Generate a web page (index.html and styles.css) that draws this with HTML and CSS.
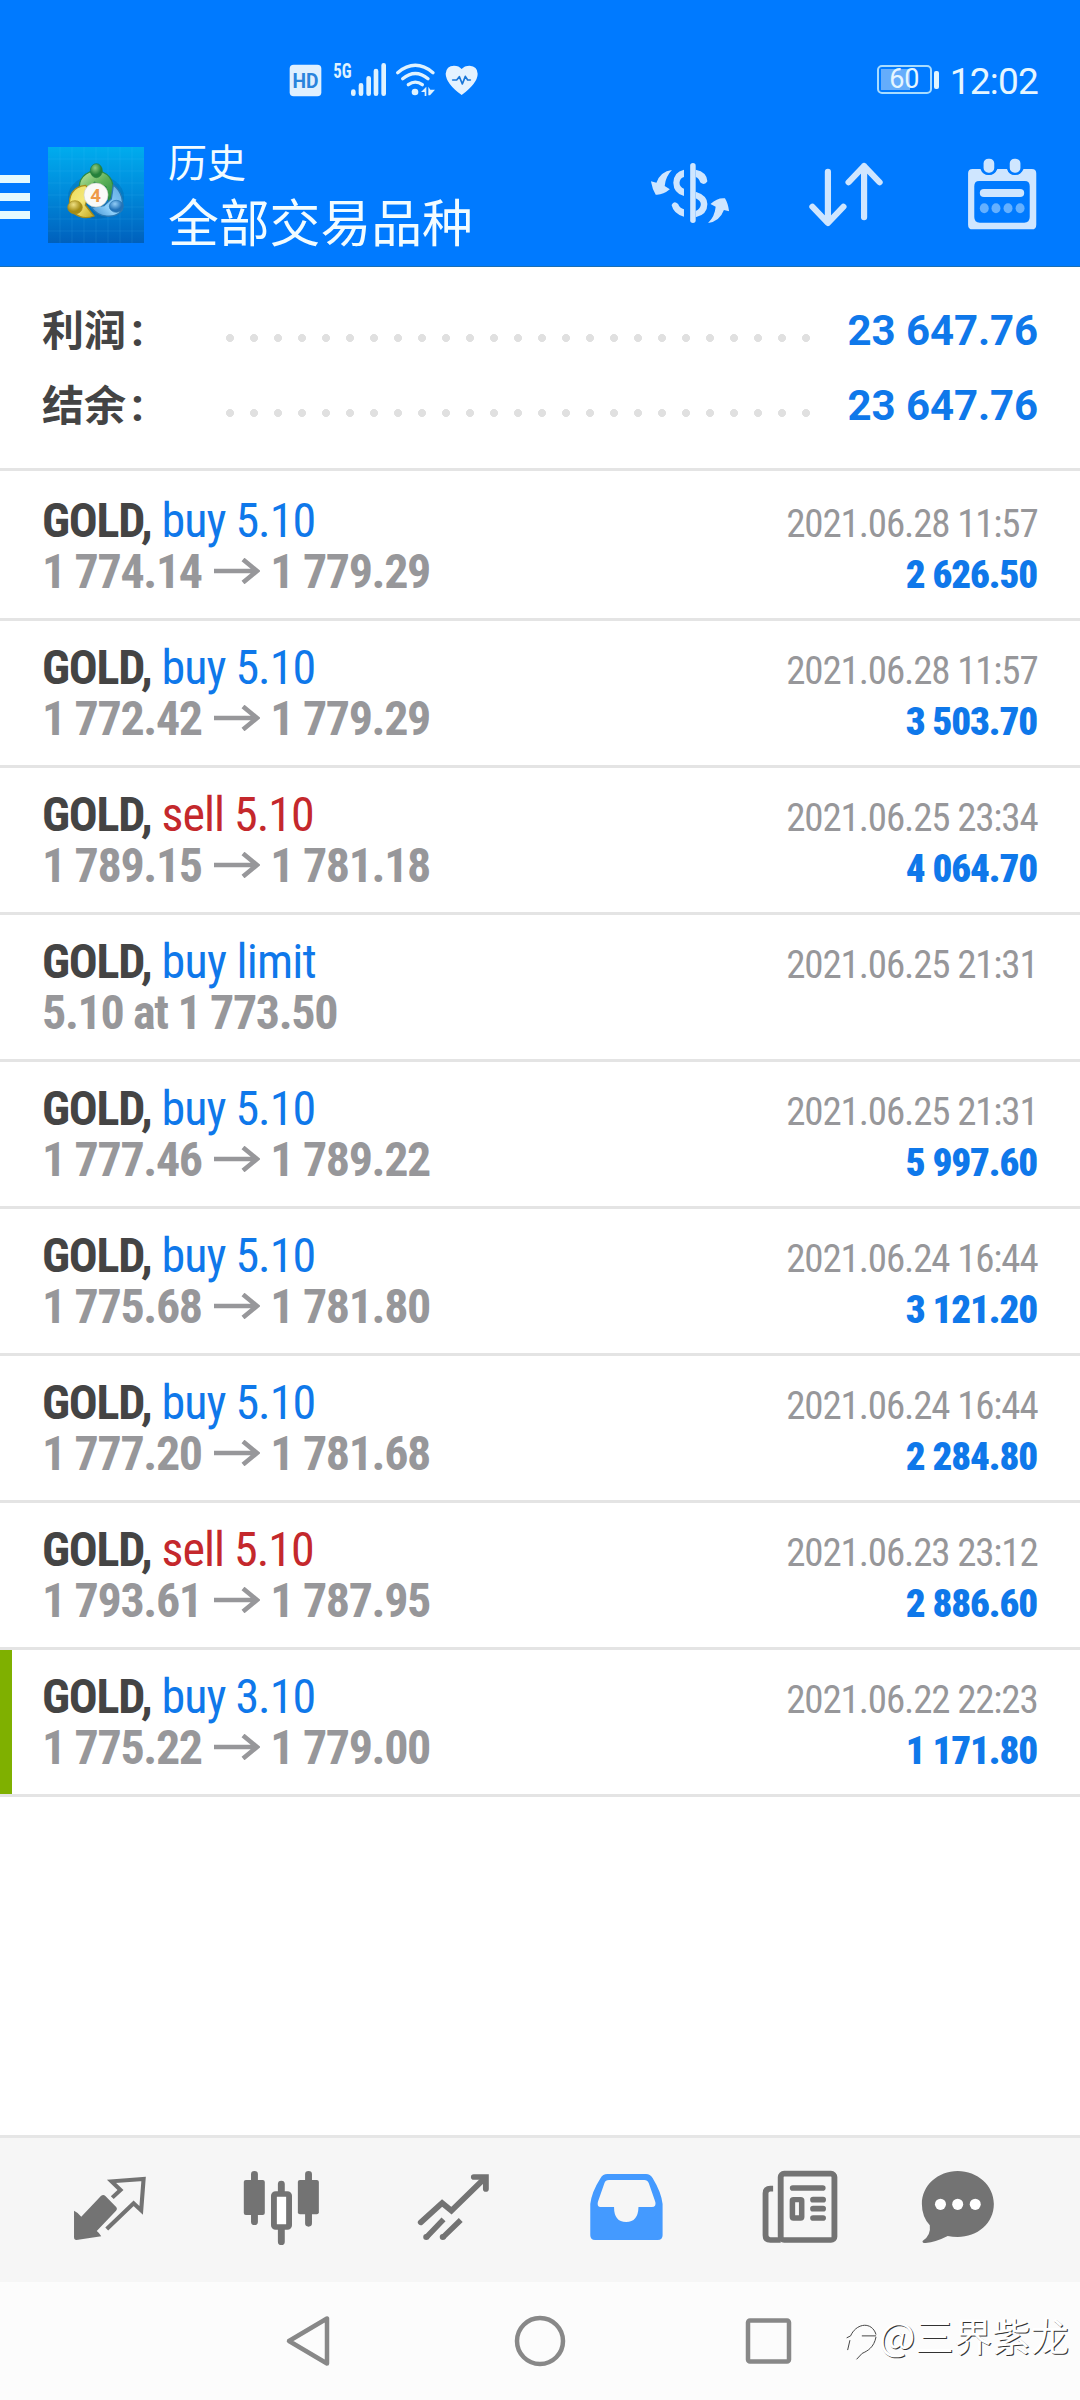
FILE: index.html
```html
<!DOCTYPE html>
<html lang="zh-CN">
<head>
<meta charset="utf-8">
<title>历史</title>
<link rel="stylesheet" href="styles.css">
</head>
<body>
<div class="screen">
  <header class="header">
    <div class="status">
      <svg class="status-icons" viewBox="0 0 630 150">
        <rect x="29" y="29" width="95" height="95" rx="12" fill="#dff0ff"/>
        <text x="76.500" y="98" class="hd" text-anchor="middle" textLength="78" lengthAdjust="spacingAndGlyphs">HD</text>
        <text x="160" y="68" class="net" textLength="55" lengthAdjust="spacingAndGlyphs">5G</text>
        <g stroke="#dff2ff" stroke-width="14" stroke-linecap="round">
          <path d="M220 110v6M243 91v25M266 70v46M288 48v68M311 31v85"/>
        </g>
        <g fill="none" stroke="#dff2ff" stroke-width="10" stroke-linecap="round">
          <path d="M353 53Q406 9 459 53M368 71Q406 40 444 71M385 89Q406 74 427 89"/>
        </g>
        <circle cx="405" cy="111" r="10" fill="#dff2ff"/>
        <path d="M423 111l16-16v28h-5v-12zM445 95l6 9h14l-15 17h-5z" fill="#dff2ff"/>
        <path d="M545 120Q498 86 497 56Q499 32 522 32Q537 32 545 42Q553 32 569 32Q592 33 593 56Q593 84 545 120Z" fill="#e4f2ff"/>
        <path d="M518 75h12l8-10 9 22 9-23 7 11h8" fill="none" stroke="#1976d8" stroke-width="5" stroke-linecap="round" stroke-linejoin="round"/>
      </svg>
      <div class="battery"><span class="cell"><b>60</b></span><i></i></div>
      <div class="clock">12:02</div>
    </div>
    <div class="appbar">
      <div class="menu"><i></i><i></i><i></i></div>
      <svg class="logo" viewBox="0 0 288 288">
        <defs>
          <linearGradient id="sky" x1="0" y1="0" x2="0" y2="1"><stop offset="0" stop-color="#00acee"/><stop offset=".45" stop-color="#008cdc"/><stop offset="1" stop-color="#0060bc"/></linearGradient>
          <linearGradient id="g" x1="0" y1="0" x2="1" y2="1"><stop offset="0" stop-color="#c2e8a4"/><stop offset=".5" stop-color="#5fb25a"/><stop offset="1" stop-color="#258b3c"/></linearGradient>
          <linearGradient id="y" x1="0" y1="0" x2="1" y2="1"><stop offset="0" stop-color="#e9da5c"/><stop offset=".5" stop-color="#f5e878"/><stop offset="1" stop-color="#c2a41c"/></linearGradient>
          <linearGradient id="b" x1="1" y1="0" x2="0" y2="1"><stop offset="0" stop-color="#5ba8e0"/><stop offset=".6" stop-color="#8fd0fa"/><stop offset="1" stop-color="#3a8cce"/></linearGradient>
          <radialGradient id="gb" cx=".4" cy=".3"><stop offset="0" stop-color="#8fcb82"/><stop offset="1" stop-color="#23803a"/></radialGradient>
          <radialGradient id="yb" cx=".4" cy=".3"><stop offset="0" stop-color="#efe083"/><stop offset="1" stop-color="#a58c14"/></radialGradient>
          <radialGradient id="bb" cx=".4" cy=".3"><stop offset="0" stop-color="#92cdf7"/><stop offset="1" stop-color="#2272b8"/></radialGradient>
        </defs>
        <path d="M0 0h288v288H0z" fill="url(#sky)"/>
        <path d="M36 0v288M72 0v288M108 0v288M144 0v288M180 0v288M216 0v288M252 0v288M0 36h288M0 72h288M0 108h288M0 144h288M0 180h288M0 216h288M0 252h288" stroke="#5ac8ff" stroke-opacity=".18" stroke-width="2"/>
        <ellipse cx="144" cy="150" rx="84" ry="66" fill="#024f86" opacity=".25"/>
        <path d="M125 75C92 90 86 122 104 145L140 106l34 14 8 40C204 134 200 90 163 75Z" fill="url(#g)" stroke="#2c8a44" stroke-width="4"/>
        <path d="M113 115C72 118 60 150 66 182c14 28 44 36 72 25l-26-33 14-42Z" fill="url(#y)" stroke="#a58b19" stroke-width="4"/>
        <path d="M196 114c26 20 32 52 26 76-22 26-69 24-92-9l38-5 22-20Z" fill="url(#b)" stroke="#2b79b4" stroke-width="4"/>
        <ellipse cx="145" cy="71" rx="18" ry="21" fill="url(#gb)" stroke="#267d3b" stroke-width="2"/>
        <ellipse cx="81" cy="181" rx="22" ry="20" fill="url(#yb)" stroke="#a48a1b" stroke-width="2"/>
        <ellipse cx="205" cy="178" rx="21" ry="18" fill="url(#bb)" stroke="#2875b0" stroke-width="2"/>
        <circle cx="144" cy="144" r="36" fill="#fafaf8" stroke="#cfd3c8" stroke-width="2"/>
        <text x="143" y="164" class="four" text-anchor="middle">4</text>
      </svg>
      <div class="titles">
        <div class="t1">历史</div>
        <div class="t2">全部交易品种</div>
      </div>
      <div class="actions">
        <svg viewBox="209 330 453 270" preserveAspectRatio="none" fill="#cfe6ff">
          <path d="M383 390Q350 394 338 428L322 424Q326 448 336 464Q356 466 377 448L362 438Q364 410 383 390ZM488 549Q522 544 534 510L549 514Q546 490 537 475Q516 472 495 492L510 500Q508 528 488 549Z"/>
          <path d="M444 377v164" stroke="#cfe6ff" stroke-width="16" stroke-linecap="round"/>
          <path d="M418 389Q388 396 387 428Q388 460 418 468V446Q405 440 405 428Q406 415 418 411ZM452 389Q485 396 486 424Q478 438 465 427Q462 415 452 411ZM452 455Q486 466 486 492Q486 524 452 532V513Q467 506 467 492Q466 482 452 475ZM382 495Q389 480 401 492Q406 505 418 508V530Q388 522 382 495Z"/>
        </svg>
        <svg viewBox="662 330 453 270" preserveAspectRatio="none" fill="none" stroke="#cfe6ff" stroke-width="18" stroke-linecap="round" stroke-linejoin="round">
          <path d="M836 395v150M791 500l45 49 45-49M941 532V378M896 427l45-49 45 49"/>
        </svg>
        <svg viewBox="1115 330 453 270" preserveAspectRatio="none">
          <path fill="#cfe6ff" fill-rule="evenodd" d="M1256 387h23q6 18 24 18t25-18h28q5 18 23 18t25-18h24q13 0 13 13v154q0 14-13 14h-172q-13 0-13-14V400q0-13 13-13ZM1275 423q-14 0-14 16v92q0 17 16 17h129q16 0 16-17v-92q0-16-14-16Z"/>
          <g fill="#cfe6ff" stroke="#007aff" stroke-width="6"><rect x="1285" y="353" width="37" height="48" rx="17"/><rect x="1361" y="353" width="37" height="48" rx="17"/></g><rect x="1277" y="447" width="129" height="24" rx="12" fill="#cfe6ff"/>
          <g fill="#64b0ff"><ellipse cx="1290" cy="505" rx="13" ry="15"/><ellipse cx="1324" cy="505" rx="13" ry="15"/><ellipse cx="1359" cy="505" rx="13" ry="15"/><ellipse cx="1394" cy="505" rx="13" ry="15"/></g>
        </svg>
      </div>
    </div>
  </header>

  <svg class="defs"><symbol id="arrow" viewBox="0 0 46 26"><path d="M0 13h43M29 1.500L43 13 29 24.500" fill="none" stroke="#97979a" stroke-width="4.600"/></symbol></svg>

  <section class="summary">
    <div class="sum"><span class="label">利润<em>:</em></span><span class="dots"></span><span class="total">23 647.76</span></div>
    <div class="sum"><span class="label">结余<em>:</em></span><span class="dots"></span><span class="total">23 647.76</span></div>
  </section>

  <main class="deals">
    <div class="deal"><div class="line"><b>GOLD,</b><span class="buy">buy 5.10</span><time>2021.06.28 11:57</time></div><div class="line price"><span>1 774.14</span><svg class="arrow"><use href="#arrow"/></svg><span>1 779.29</span><strong>2 626.50</strong></div></div>
    <div class="deal"><div class="line"><b>GOLD,</b><span class="buy">buy 5.10</span><time>2021.06.28 11:57</time></div><div class="line price"><span>1 772.42</span><svg class="arrow"><use href="#arrow"/></svg><span>1 779.29</span><strong>3 503.70</strong></div></div>
    <div class="deal"><div class="line"><b>GOLD,</b><span class="sell">sell 5.10</span><time>2021.06.25 23:34</time></div><div class="line price"><span>1 789.15</span><svg class="arrow"><use href="#arrow"/></svg><span>1 781.18</span><strong>4 064.70</strong></div></div>
    <div class="deal"><div class="line"><b>GOLD,</b><span class="buy limit">buy limit</span><time>2021.06.25 21:31</time></div><div class="line price"><span>5.10 at 1 773.50</span></div></div>
    <div class="deal"><div class="line"><b>GOLD,</b><span class="buy">buy 5.10</span><time>2021.06.25 21:31</time></div><div class="line price"><span>1 777.46</span><svg class="arrow"><use href="#arrow"/></svg><span>1 789.22</span><strong>5 997.60</strong></div></div>
    <div class="deal"><div class="line"><b>GOLD,</b><span class="buy">buy 5.10</span><time>2021.06.24 16:44</time></div><div class="line price"><span>1 775.68</span><svg class="arrow"><use href="#arrow"/></svg><span>1 781.80</span><strong>3 121.20</strong></div></div>
    <div class="deal"><div class="line"><b>GOLD,</b><span class="buy">buy 5.10</span><time>2021.06.24 16:44</time></div><div class="line price"><span>1 777.20</span><svg class="arrow"><use href="#arrow"/></svg><span>1 781.68</span><strong>2 284.80</strong></div></div>
    <div class="deal"><div class="line"><b>GOLD,</b><span class="sell">sell 5.10</span><time>2021.06.23 23:12</time></div><div class="line price"><span>1 793.61</span><svg class="arrow"><use href="#arrow"/></svg><span>1 787.95</span><strong>2 886.60</strong></div></div>
    <div class="deal marked"><div class="line"><b>GOLD,</b><span class="buy">buy 3.10</span><time>2021.06.22 22:23</time></div><div class="line price"><span>1 775.22</span><svg class="arrow"><use href="#arrow"/></svg><span>1 779.00</span><strong>1 171.80</strong></div></div>
  </main>

  <nav class="tabs">
    <svg viewBox="69.700 150 499.500 240" preserveAspectRatio="none">
      <path fill="#737373" d="M215 272Q226 277 236 290L293 228Q300 222 306 228L338 262Q342 267 337 272L281 333Q290 340 294 349L222 360Q215 360 215 352Z"/>
      <path fill="none" stroke="#737373" stroke-width="12" d="M326 233l24-23-26-26 93-7-7 94-22-21-78 77"/>
    </svg>
    <svg viewBox="569.200 150 499.500 240" preserveAspectRatio="none">
      <path stroke="#737373" stroke-width="20" stroke-linecap="round" d="M739 163v142M896 163v147M817 192v30M817 325v40"/>
      <g fill="#737373"><rect x="708" y="180" width="61" height="105" rx="6"/><rect x="865" y="180" width="61" height="103" rx="6"/></g>
      <rect x="795.500" y="222" width="44" height="99" rx="5" fill="#fff" stroke="#737373" stroke-width="17"/>
    </svg>
    <svg viewBox="1068.700 150 499.500 240" preserveAspectRatio="none" fill="none" stroke="#737373" stroke-width="17">
      <path stroke-linecap="round" d="M1376 171h35v36"/><path stroke-linecap="round" stroke-linejoin="miter" d="M1222 307l62-58 27 23 95-96"/><path d="M1238 352l50-54M1286 352l52-52" stroke-width="16"/><g fill="#737373" stroke="none"><circle cx="1238" cy="351" r="9"/><circle cx="1286" cy="351" r="9"/></g>
    </svg>
    <svg viewBox="0 150 499.500 240" preserveAspectRatio="none">
      <path fill="#449aff" fill-rule="evenodd" d="M196 162H308Q320 162 327 174Q352 216 356 252V346Q356 360 342 360H160Q146 360 146 346V252Q150 216 176 174Q182 162 196 162ZM200 180Q190 180 187 190L168 246Q165 261 176 261H215Q215 306 250 306T286 261H325Q338 261 335 246L316 190Q312 180 303 180Z"/>
    </svg>
    <svg viewBox="499.500 150 499.500 240" preserveAspectRatio="none" fill="none" stroke="#737373" stroke-width="17">
      <rect x="699" y="161" width="156" height="199" rx="10"/><path d="M677 206h-8q-14 0-14 14v126q0 14 14 14h30"/><path stroke-linecap="round" d="M734 204h87M793 239h29M793 266h29M793 294h29"/><rect x="733" y="239" width="27" height="55" rx="3" stroke-width="16"/>
    </svg>
    <svg viewBox="999 150 499.500 240" preserveAspectRatio="none">
      <path fill="#737373" d="M1213 153C1270 153 1318 196 1318 252C1318 310 1270 351 1213 351Q1198 351 1184 348Q1150 366 1120 369Q1110 370 1111 363Q1136 347 1132 316Q1109 290 1109 252C1109 196 1156 153 1213 153Z"/>
      <g fill="#fff"><ellipse cx="1163" cy="253" rx="16" ry="17"/><ellipse cx="1213" cy="253" rx="16" ry="17"/><ellipse cx="1264" cy="253" rx="16" ry="17"/></g>
    </svg>
  </nav>

  <footer class="sysnav">
    <svg viewBox="0 0 60 60"><path d="M49 7.500v45L11 30Z"/></svg>
    <svg viewBox="0 0 60 60"><circle cx="32" cy="30" r="23"/></svg>
    <svg viewBox="0 0 60 60"><rect x="10" y="9.500" width="41" height="41" rx="2"/></svg>
    <div class="mark">
      <svg viewBox="0 0 100 125"><path d="M5 53l12-6C32 12 74 2 91 35l3 8M51 47h43M94 50c-6 32-26 43-42 50l-17 18M15 60L8 90"/></svg>
      <span>@三界紫龙</span>
    </div>
  </footer>
</div>
</body>
</html>
```
FILE: styles.css
```css
* { box-sizing: border-box; }
body { margin: 0; background: #fff; font-family: Roboto, "Noto Sans CJK SC", sans-serif; }
.screen { width: 1080px; height: 2400px; display: flex; flex-direction: column; overflow: hidden; }
svg { display: block; flex: none; }
.defs { width: 0; height: 0; }

.header { height: 267px; background: #007aff; border-bottom: 1px solid #1a6fb4; }
.status { display: flex; padding: 55px 42px 0 280px; height: 112px; color: #e6f6ff; }
.status-icons { width: 210px; height: 50px; }
.hd { font: 700 60px Roboto, sans-serif; fill: #2a84dc; }
.net { font: 700 62px "Roboto Condensed", sans-serif; fill: #dff2ff; }
.battery { display: flex; align-items: center; gap: 2px; margin: 10px 0 0 auto; height: 29px; }
.cell { width: 55px; height: 29px; border: 2px solid #a8dcff; border-radius: 5px; padding: 2px; display: flex; justify-content: center; align-items: center;
  background: linear-gradient(90deg, #65adfb 0 29px, transparent 29px) 2px 2px / 47px 21px no-repeat; }
.cell b { font-weight: 400; font-size: 27px; line-height: 25px; }
.battery i { width: 5px; height: 18px; border-radius: 2px; background: #e0f6ff; }
.clock { margin-left: 11px; font-size: 37px; line-height: 54px; letter-spacing: -.8px; }

.appbar { display: flex; height: 154px; }
.menu { width: 30px; margin: 63px 18px 0 0; display: flex; flex-direction: column; gap: 10px; }
.menu i { height: 8px; background: #e4faff; }
.logo { width: 96px; height: 96px; margin-top: 35px; }
.four { font: 700 56px Roboto, sans-serif; fill: #ee9a4a; }
.titles { margin: 27px auto 0 24px; color: #f2fcff; white-space: nowrap; font-family: "Noto Sans CJK SC", sans-serif; }
.t1 { font-size: 39px; line-height: 42px; }
.t2 { font-size: 50.8px; line-height: 60px; margin-top: 9px; }
.actions { display: flex; padding-top: 38px; }
.actions svg { width: 156px; height: 90px; }

.summary { height: 204px; padding: 26px 42px 0; border-bottom: 3px solid #e4e4e4; }
.sum { display: flex; align-items: center; height: 75px; }
.label { width: 176px; margin-top: -6px; font: 700 42px "Noto Sans CJK SC", sans-serif; line-height: 75px; color: #444; }
.label em { font: 700 46px Roboto, sans-serif; margin-left: 5px; }
.dots { width: 600px; height: 8px; margin-top: 14px; background: radial-gradient(circle at 12px 4px, #e0e0e0 3.7px, transparent 4.3px) 0 0 / 24px 8px; }
.total { margin-left: auto; font-size: 42px; font-weight: 700; color: #0f78ea; letter-spacing: -.1px; }

.deals { flex: 1; padding-top: 3px; font-family: "Roboto Condensed", Roboto, sans-serif; }
.deal { height: 147px; padding: 21px 42px 0; border-bottom: 3px solid #e4e4e4; }
.line { display: flex; align-items: baseline; height: 51px; font-size: 48px; line-height: 51px; white-space: nowrap; color: #97979a; }
.line b { width: 119.5px; color: #444; letter-spacing: -1.3px; }
.buy { color: #0f78ea; letter-spacing: -1px; }
.limit { letter-spacing: -.75px; }
.sell { color: #c4282c; letter-spacing: -1px; }
.line time { margin-left: auto; font-size: 39px; letter-spacing: -1.15px; margin-right: .5px; }
.price { font-weight: 700; }
.price span { letter-spacing: -1.35px; }
.arrow { width: 46px; height: 26px; margin: 0 10.5px 0 12px; position: relative; top: -4px; }
.line strong { margin-left: auto; font-size: 39px; color: #0f78ea; letter-spacing: -1.15px; margin-right: 1px; }
.marked { background: linear-gradient(#7fb000, #7fb000) 0 0 / 12px 100% no-repeat; }

.tabs { height: 147px; padding: 32px 24px 0; display: flex; background: #f6f6f6; border-top: 3px solid #e6e6e6; }
.tabs svg { width: 172px; height: 80px; overflow: visible; }
.sysnav { height: 118px; padding: 29px 0 0 278px; display: flex; background: #fcfcfc; gap: 170px; }
.sysnav > svg { width: 60px; height: 60px; fill: none; stroke: #888; stroke-width: 4.5; stroke-linejoin: round; }
.mark { display: flex; margin: -7px 0 0 -123px; color: #fff; font: 38.4px/60px "Noto Sans CJK SC", sans-serif; text-shadow: 1px 1px 0 #333; white-space: nowrap; }
.mark svg { width: 33px; height: 42px; margin: 16px 1px 0 0; fill: none; stroke: #444; stroke-width: 3; }
```
